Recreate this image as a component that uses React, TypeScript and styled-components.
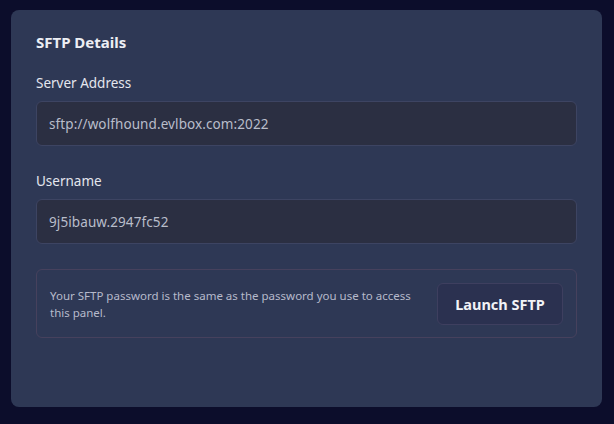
import React from 'react';
import styled, { createGlobalStyle } from 'styled-components';

const GlobalStyle = createGlobalStyle`
  html, body {
    margin: 0;
    padding: 0;
    background: #0c0d2b;
    font-family: "Noto Sans", "Open Sans", sans-serif;
  }
`;

const Page = styled.div`
  padding: 10px 12px 17px 11px;
  height: 424px;
  box-sizing: border-box;
`;

const Card = styled.div`
  height: 100%;
  box-sizing: border-box;
  background: #2e3855;
  border-radius: 8px;
  padding: 22px 25px;
  display: flex;
  flex-direction: column;
`;

const Title = styled.h2`
  margin: 0 0 20px;
  font-size: 15px;
  font-weight: 700;
  color: #eceef4;
  line-height: 20px;
`;

const Field = styled.div`
  display: flex;
  flex-direction: column;
  margin-bottom: 24px;
`;

const Label = styled.label`
  font-size: 13.5px;
  color: #e4e6ee;
  line-height: 20px;
  margin-top: 1px;
  margin-bottom: 8px;
`;

const Input = styled.div`
  height: 45px;
  box-sizing: border-box;
  display: flex;
  align-items: center;
  padding: 0 12px;
  background: #2b2f42;
  border: 1px solid #3d4462;
  border-radius: 6px;
  font-size: 13.5px;
  letter-spacing: 0.1px;
  color: #b9bdca;
`;

const Info = styled.div`
  display: flex;
  align-items: center;
  justify-content: space-between;
  gap: 20px;
  height: 69px;
  margin-top: 1px;
  box-sizing: border-box;
  padding: 0 13px;
  border: 1px solid #46415d;
  border-radius: 6px;
`;

const InfoText = styled.p`
  margin: 0;
  font-size: 11.5px;
  line-height: 17px;
  color: #b6bacb;
  max-width: 380px;
`;

const Button = styled.button`
  flex-shrink: 0;
  width: 126px;
  height: 42px;
  background: #2b3150;
  border: 1px solid #3e3f5f;
  border-radius: 6px;
  color: #f2f3f7;
  font-family: inherit;
  font-size: 14.5px;
  font-weight: 700;
  cursor: pointer;
`;

export default function App() {
  return (
    <>
      <GlobalStyle />
      <Page>
        <Card>
          <Title>SFTP Details</Title>
          <Field>
            <Label>Server Address</Label>
            <Input>sftp://wolfhound.evlbox.com:2022</Input>
          </Field>
          <Field>
            <Label>Username</Label>
            <Input>9j5ibauw.2947fc52</Input>
          </Field>
          <Info>
            <InfoText>
              Your SFTP password is the same as the password you use to access this panel.
            </InfoText>
            <Button>Launch SFTP</Button>
          </Info>
        </Card>
      </Page>
    </>
  );
}
